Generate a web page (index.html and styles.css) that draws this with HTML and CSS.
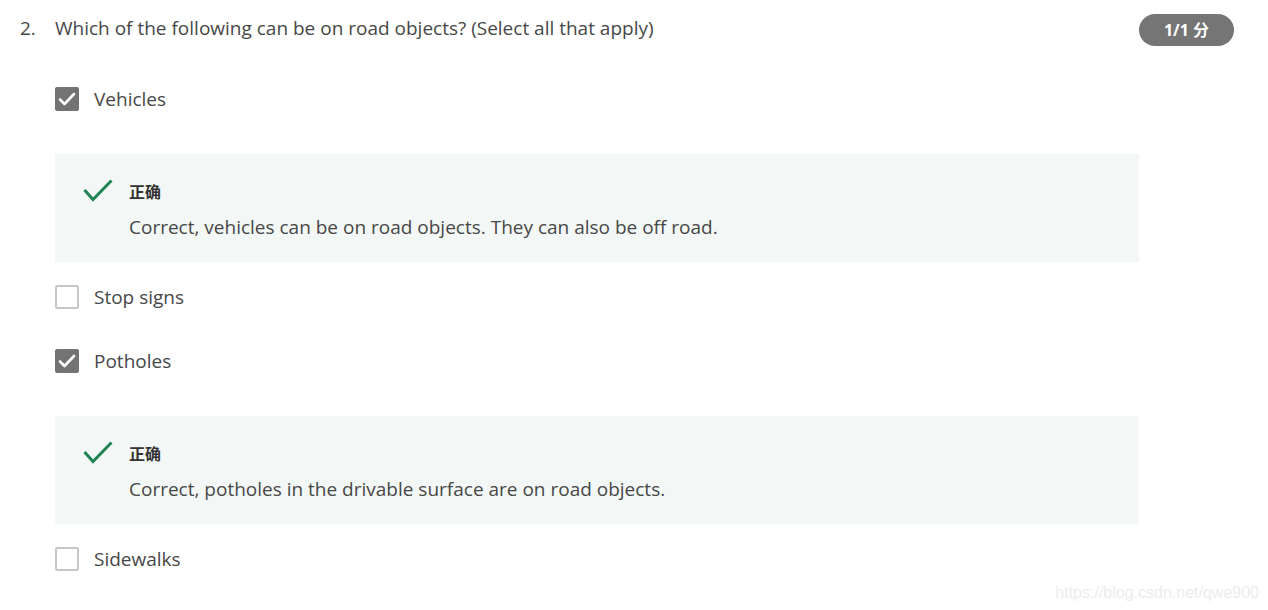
FILE: index.html
```html
<!DOCTYPE html>
<html lang="zh">
<head>
<meta charset="utf-8">
<title>Quiz question</title>
<link rel="stylesheet" href="styles.css">
</head>
<body>
<div class="question">
  <div class="q-header">
    <div class="q-num">2.</div>
    <div class="q-text">Which of the following can be on road objects? (Select all that apply)</div>
    <div class="badge">1/1 分</div>
  </div>
  <div class="options">
    <div class="item has-fb">
      <div class="opt"><span class="box checked"><svg viewBox="0 0 24 24" width="24" height="24"><path d="M5 12.5l4.5 4.5 9.5-10" fill="none" stroke="#fff" stroke-width="2.6" stroke-linecap="round" stroke-linejoin="round"/></svg></span><span class="label">Vehicles</span></div>
      <div class="feedback">
        <svg class="ok" viewBox="0 0 30 24" width="30" height="24"><path d="M1.5 11l8.5 9.5L28.5 1.5" fill="none" stroke="#1f8354" stroke-width="3"/></svg>
        <div class="fb-body">
          <div class="fb-title">正确</div>
          <div class="fb-text">Correct, vehicles can be on road objects. They can also be off road.</div>
        </div>
      </div>
    </div>
    <div class="item">
      <div class="opt"><span class="box"></span><span class="label">Stop signs</span></div>
    </div>
    <div class="item has-fb">
      <div class="opt"><span class="box checked"><svg viewBox="0 0 24 24" width="24" height="24"><path d="M5 12.5l4.5 4.5 9.5-10" fill="none" stroke="#fff" stroke-width="2.6" stroke-linecap="round" stroke-linejoin="round"/></svg></span><span class="label">Potholes</span></div>
      <div class="feedback">
        <svg class="ok" viewBox="0 0 30 24" width="30" height="24"><path d="M1.5 11l8.5 9.5L28.5 1.5" fill="none" stroke="#1f8354" stroke-width="3"/></svg>
        <div class="fb-body">
          <div class="fb-title">正确</div>
          <div class="fb-text">Correct, potholes in the drivable surface are on road objects.</div>
        </div>
      </div>
    </div>
    <div class="item">
      <div class="opt"><span class="box"></span><span class="label">Sidewalks</span></div>
    </div>
  </div>
</div>
<div class="watermark">https://blog.csdn.net/qwe900</div>
</body>
</html>
```
FILE: styles.css
```css
html, body {
  margin: 0;
  padding: 0;
  background: #fff;
}
body {
  font-family: "Open Sans", "Noto Sans CJK SC", sans-serif;
  color: #474747;
  width: 1268px;
  height: 610px;
  position: relative;
  overflow: hidden;
}
.question {
  padding: 14px 34px 0 20px;
}
.q-header {
  display: flex;
  align-items: flex-start;
}
.q-num {
  width: 35px;
  font-size: 19px;
  line-height: 24px;
  margin-top: 2px;
}
.q-text {
  flex: 1;
  font-size: 19px;
  line-height: 24px;
  margin-top: 2px;
}
.badge {
  width: 95px;
  height: 32px;
  border-radius: 16px;
  background: #757575;
  color: #fff;
  font-family: "Open Sans", "Noto Sans CJK SC", sans-serif;
  font-weight: 700;
  font-size: 16px;
  line-height: 32px;
  text-align: center;
}
.options {
  margin: 41px 0 0 35px;
  width: 1084px;
}
.item {
  margin-bottom: 40px;
}
.item.has-fb {
  margin-bottom: 23px;
}
.opt {
  display: flex;
  align-items: center;
  height: 24px;
}
.box {
  width: 24px;
  height: 24px;
  box-sizing: border-box;
  border: 2px solid #c6c6c6;
  border-radius: 2px;
  margin-right: 15px;
  flex: none;
}
.box.checked {
  border: none;
  background: #737373;
}
.box svg {
  display: block;
}
.label {
  font-size: 19px;
  line-height: 24px;
}
.feedback {
  margin-top: 43px;
  background: #f3f8f6;
  display: flex;
  align-items: flex-start;
  padding: 25px 28px 23px 28px;
}
.ok {
  display: block;
  flex: none;
  margin-right: 16px;
}
.fb-title {
  font-family: "Noto Sans CJK SC", sans-serif;
  font-weight: 700;
  font-size: 16px;
  line-height: 24px;
  color: #333;
}
.fb-text {
  margin-top: 12px;
  font-size: 19px;
  line-height: 24px;
}
.watermark {
  position: absolute;
  right: 9px;
  bottom: 8px;
  font-family: "Liberation Sans", Arial, sans-serif;
  font-size: 16px;
  color: #ececec;
}
```
